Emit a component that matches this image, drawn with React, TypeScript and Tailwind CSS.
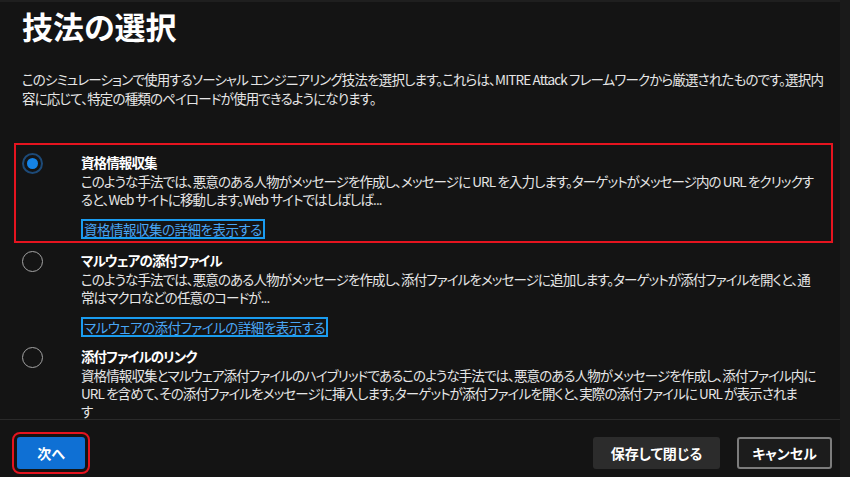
import React from "react";

type Technique = {
  id: string;
  title: string;
  lines: string[];
  link?: string;
};

const techniques: Technique[] = [
  {
    id: "cred",
    title: "資格情報収集",
    lines: [
      "このような手法では、悪意のある人物がメッセージを作成し、メッセージに URL を入力します。ターゲットがメッセージ内の URL をクリックす",
      "ると、Web サイトに移動します。Web サイトではしばしば...",
    ],
    link: "資格情報収集の詳細を表示する",
  },
  {
    id: "malware",
    title: "マルウェアの添付ファイル",
    lines: [
      "このような手法では、悪意のある人物がメッセージを作成し、添付ファイルをメッセージに追加します。ターゲットが添付ファイルを開くと、通",
      "常はマクロなどの任意のコードが...",
    ],
    link: "マルウェアの添付ファイルの詳細を表示する",
  },
  {
    id: "link",
    title: "添付ファイルのリンク",
    lines: [
      "資格情報収集とマルウェア添付ファイルのハイブリッドであるこのような手法では、悪意のある人物がメッセージを作成し、添付ファイル内に",
      "URL を含めて、その添付ファイルをメッセージに挿入します。ターゲットが添付ファイルを開くと、実際の添付ファイルに URL が表示されま",
      "す",
    ],
  },
];

function Radio({ checked }: { checked: boolean }) {
  return checked ? (
    <span className="flex h-[21px] w-[21px] shrink-0 items-center justify-center rounded-full border-2 border-[#1d4a78]">
      <span className="h-[11px] w-[11px] rounded-full bg-[#1583e6]" />
    </span>
  ) : (
    <span className="h-[21px] w-[21px] shrink-0 rounded-full border-[1.5px] border-[#a3a3a3]" />
  );
}

function TechniqueRow({ t, selected }: { t: Technique; selected: boolean }) {
  return (
    <div
      className={
        "flex border-2 pl-[6px] " +
        (selected ? "border-[#e5141f] pb-[2px] pt-[8px]" : "border-transparent pb-0 pt-[6px]")
      }
    >
      <Radio checked={selected} />
      <div className="ml-[38px] min-w-0 flex-1">
        <p className="whitespace-nowrap text-[13.5px] font-bold leading-[19px] tracking-[-0.9px] text-white">
          {t.title}
        </p>
        {t.lines.map((line, i) => (
          <p
            key={i}
            className="whitespace-nowrap text-[13.5px] leading-[18px] tracking-[-0.9px] text-[#e6e6e6]"
          >
            {line}
          </p>
        ))}
        {t.link && (
          <a className="mt-[11px] block w-fit border-2 border-[#1a9cf0] px-[1px] text-[13.5px] leading-[16px] tracking-[-0.5px] text-[#49a6f5]">
            {t.link}
          </a>
        )}
      </div>
    </div>
  );
}

export default function App() {
  return (
    <div className="flex h-[477px] w-[850px] overflow-hidden bg-[#141414] font-['Noto_Sans_CJK_JP',sans-serif] [font-feature-settings:'palt'] text-[#e6e6e6]">
      <div className="flex min-w-0 flex-1 flex-col border-t-2 border-[#1f1f1f]">
        <header className="px-[22px] pt-[2px]">
          <h1 className="text-[31px] font-bold leading-[44px] text-white">技法の選択</h1>
          <p className="mt-[22px] whitespace-nowrap text-[13.5px] leading-[19px] tracking-[-0.85px]">
            このシミュレーションで使用するソーシャル エンジニアリング技法を選択します。これらは、MITRE Attack フレームワークから厳選されたものです。選択内
            <br />
            容に応じて、特定の種類のペイロードが使用できるようになります。
          </p>
        </header>

        <div className="mt-[35px] min-h-0 flex-1 overflow-hidden pl-[14px] pr-[7px]">
          {techniques.map((t) => (
            <TechniqueRow key={t.id} t={t} selected={t.id === "cred"} />
          ))}
        </div>

        <footer className="flex items-start border-t border-[#2a2a2a] pb-[8px] pl-[17px] pr-[8px] pt-[17px]">
          <button className="h-[32px] w-[68px] rounded-[3px] bg-[#0f70d4] text-[14px] font-bold text-white outline-2 outline-offset-[3px] outline-[#e5141f]">
            次へ
          </button>
          <div className="ml-auto flex gap-[17px]">
            <button className="h-[32px] w-[127px] rounded-[3px] bg-[#2c2c2c] text-[14px] font-bold text-white">
              保存して閉じる
            </button>
            <button className="h-[32px] w-[95px] rounded-[3px] border-2 border-[#7c7c7c] bg-[#1c1c1c] text-[14px] font-bold text-white">
              キャンセル
            </button>
          </div>
        </footer>
      </div>
      <div className="w-[10px] shrink-0 bg-[#1a1a1a]" />
    </div>
  );
}
